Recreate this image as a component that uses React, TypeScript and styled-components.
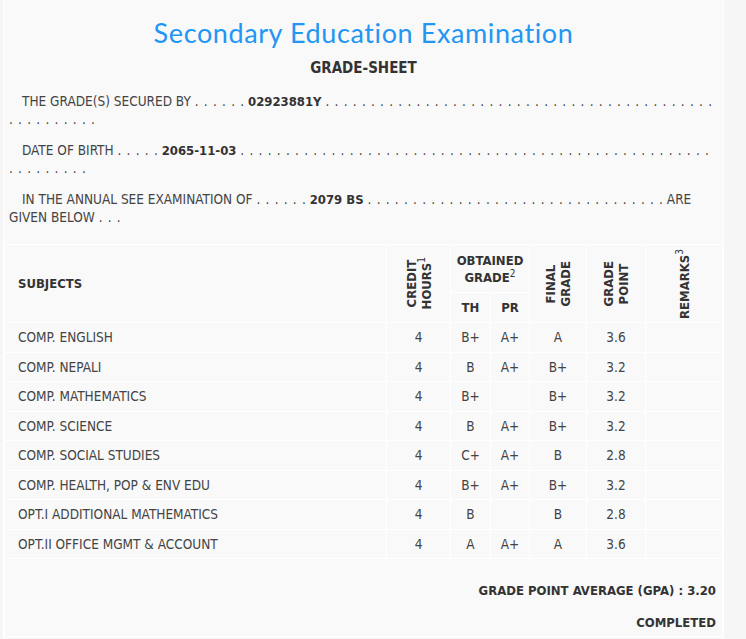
import React from "react";
import styled, { createGlobalStyle } from "styled-components";

const Global = createGlobalStyle`
  html, body { margin: 0; padding: 0; background: #f6f6f6; }
  body { font-family: "DejaVu Sans Condensed", "DejaVu Sans", sans-serif; color: #444; }
`;

const Sheet = styled.div`
  box-sizing: border-box;
  width: 721px;
  margin-left: 3px;
  min-height: 639px;
  background: #f9f9f9;
  border-left: 1px solid #ffffff;
  border-right: 1px solid #ffffff;
  padding-top: 17px;
`;

const Title = styled.h1`
  margin: 0;
  text-align: center;
  font-family: "Lato", sans-serif;
  font-weight: 400;
  font-size: 27px;
  letter-spacing: 0.6px;
  line-height: 32px;
  color: #2196f3;
`;

const SubTitle = styled.h2`
  margin: 10px 0 0;
  text-align: center;
  font-size: 15px;
  line-height: 18px;
  font-weight: 700;
  color: #333;
`;

const Info = styled.div`
  padding: 16px 6px 0 5px;
  display: flex;
  flex-direction: column;
  gap: 15px;
`;

const Line = styled.p`
  margin: 0;
  font-size: 13.5px;
  line-height: 16.5px;
  text-indent: 13px;
  color: #444;
`;

const Dots = styled.span`
  word-spacing: 1.4px;
`;

const Strong = styled.b`
  color: #333;
  font-size: 13px;
`;

const Table = styled.table`
  margin-top: 19px;
  width: 100%;
  border-collapse: collapse;
  table-layout: fixed;
  font-size: 13.5px;
  color: #444;
`;

const Th = styled.th<{ $align?: string }>`
  border: 1px solid #ffffff;
  font-weight: 700;
  font-size: 13px;
  color: #333;
  text-align: ${(p) => p.$align || "center"};
  vertical-align: middle;
  padding: 0;
  line-height: 17px;
  padding-left: ${(p) => (p.$align === "left" ? "13px" : "0")};
`;

const Vertical = styled.div`
  writing-mode: vertical-rl;
  transform: rotate(180deg);
  margin: 0 auto;
  line-height: 15px;
  white-space: nowrap;
`;

const Sup = styled.sup`
  font-size: 10px;
  font-weight: 400;
  line-height: 0;
  vertical-align: super;
`;

const Td = styled.td<{ $left?: boolean }>`
  border: 1px solid #ffffff;
  height: 28.5px;
  padding: 0;
  padding-left: ${(p) => (p.$left ? "13px" : "0")};
  text-align: ${(p) => (p.$left ? "left" : "center")};
  vertical-align: middle;
  white-space: nowrap;
`;

const FootCell = styled.td`
  border: 1px solid #ffffff;
  text-align: right;
  padding: 24px 6px 5px 0;
`;

const FootLine = styled.p`
  margin: 0 0 16px;
  font-weight: 700;
  font-size: 13px;
  color: #333;
  line-height: 16px;
  &:last-child { margin-bottom: 0; }
`;

const dots = (n: number) => Array.from({ length: n }, () => ".").join(" ");

const rows = [
  ["COMP. ENGLISH", "4", "B+", "A+", "A", "3.6"],
  ["COMP. NEPALI", "4", "B", "A+", "B+", "3.2"],
  ["COMP. MATHEMATICS", "4", "B+", "", "B+", "3.2"],
  ["COMP. SCIENCE", "4", "B", "A+", "B+", "3.2"],
  ["COMP. SOCIAL STUDIES", "4", "C+", "A+", "B", "2.8"],
  ["COMP. HEALTH, POP & ENV EDU", "4", "B+", "A+", "B+", "3.2"],
  ["OPT.I ADDITIONAL MATHEMATICS", "4", "B", "", "B", "2.8"],
  ["OPT.II OFFICE MGMT & ACCOUNT", "4", "A", "A+", "A", "3.6"],
];

export default function App() {
  return (
    <>
      <Global />
      <Sheet>
        <Title>Secondary Education Examination</Title>
        <SubTitle>GRADE-SHEET</SubTitle>
        <Info>
          <Line>
            THE GRADE(S) SECURED BY <Dots>{dots(6)}</Dots> <Strong>02923881Y</Strong> <Dots>{dots(53)}</Dots>
          </Line>
          <Line>
            DATE OF BIRTH <Dots>{dots(5)}</Dots> <Strong>2065-11-03</Strong> <Dots>{dots(61)}</Dots>
          </Line>
          <Line>
            IN THE ANNUAL SEE EXAMINATION OF <Dots>{dots(6)}</Dots> <Strong>2079 BS</Strong> <Dots>{dots(33)}</Dots> ARE GIVEN BELOW <Dots>{dots(3)}</Dots>
          </Line>
        </Info>
        <Table>
          <colgroup>
            <col style={{ width: 382 }} />
            <col style={{ width: 64 }} />
            <col style={{ width: 40 }} />
            <col style={{ width: 39 }} />
            <col style={{ width: 57 }} />
            <col style={{ width: 59 }} />
            <col />
          </colgroup>
          <thead>
            <tr style={{ height: 48 }}>
              <Th rowSpan={2} $align="left">SUBJECTS</Th>
              <Th rowSpan={2}>
                <Vertical>CREDIT<br />HOURS<Sup>1</Sup></Vertical>
              </Th>
              <Th colSpan={2}>
                OBTAINED<br />GRADE<Sup>2</Sup>
              </Th>
              <Th rowSpan={2}>
                <Vertical>FINAL<br />GRADE</Vertical>
              </Th>
              <Th rowSpan={2}>
                <Vertical>GRADE<br />POINT</Vertical>
              </Th>
              <Th rowSpan={2}>
                <Vertical>REMARKS<Sup>3</Sup></Vertical>
              </Th>
            </tr>
            <tr style={{ height: 30 }}>
              <Th>TH</Th>
              <Th>PR</Th>
            </tr>
          </thead>
          <tbody>
            {rows.map((r) => (
              <tr key={r[0]}>
                <Td $left>{r[0]}</Td>
                <Td>{r[1]}</Td>
                <Td>{r[2]}</Td>
                <Td>{r[3]}</Td>
                <Td>{r[4]}</Td>
                <Td>{r[5]}</Td>
                <Td />
              </tr>
            ))}
          </tbody>
          <tfoot>
            <tr>
              <FootCell colSpan={7}>
                <FootLine>GRADE POINT AVERAGE (GPA) : 3.20</FootLine>
                <FootLine>COMPLETED</FootLine>
              </FootCell>
            </tr>
          </tfoot>
        </Table>
      </Sheet>
    </>
  );
}
